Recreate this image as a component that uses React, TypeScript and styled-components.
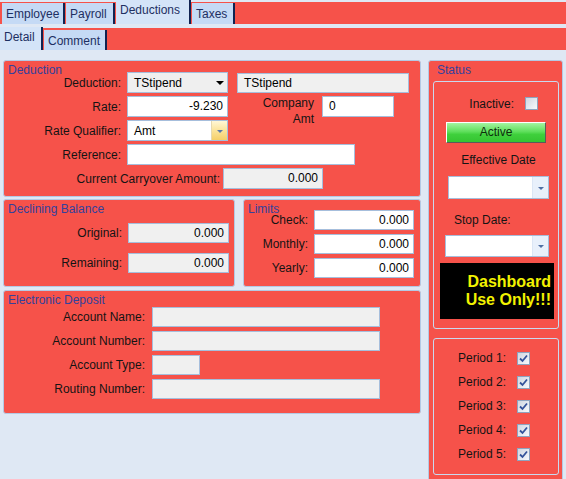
import React from 'react';
import styled, { createGlobalStyle } from 'styled-components';

const red = '#f6524a';
const pageBg = '#dfe8f4';
const frame = '#b4c9e4';
const fieldLine = '#a6bedc';
const captionBlue = '#34419c';

const GlobalStyle = createGlobalStyle`
    html, body {
        margin: 0;
        padding: 0;
        overflow: hidden;
        background: ${pageBg};
    }
    body {
        font-family: 'Liberation Sans', Arial, sans-serif;
        font-size: 12px;
        color: #141414;
    }
`;

const Page = styled.div`
    width: 566px;
    height: 479px;
    overflow: hidden;
    background: ${pageBg};
`;

const TabStrip = styled.div<{ $top: number; $indent: number }>`
    display: flex;
    align-items: flex-end;
    gap: 1px;
    height: 22px;
    margin-top: ${({ $top }) => $top}px;
    padding-left: ${({ $indent }) => $indent}px;
    background: ${red};
`;

const Tab = styled.div<{ $width: number; $height: number; $active?: boolean }>`
    box-sizing: border-box;
    flex-shrink: 0;
    width: ${({ $width }) => $width}px;
    height: ${({ $height }) => $height}px;
    padding: ${({ $active }) => ($active ? '3px 0 0 4px' : '4px 0 0 4px')};
    background: ${({ $active }) => ($active ? '#d4e4f8' : '#c5daf5')};
    border-right: 2px solid #102352;
    color: #1d2f62;
    font-size: 12px;
    line-height: 14px;
    white-space: nowrap;
`;

const Body = styled.div`
    display: flex;
    align-items: flex-start;
    gap: 7px;
    padding: 10px 0 0 3px;
`;

const LeftColumn = styled.div`
    display: flex;
    flex-direction: column;
    width: 418px;
`;

const GroupRow = styled.div`
    display: flex;
    gap: 8px;
    margin-top: 2px;
`;

const Group = styled.section<{ $width?: number; $height: number; $top?: number }>`
    box-sizing: border-box;
    flex-shrink: 0;
    width: ${({ $width }) => ($width ? `${$width}px` : '100%')};
    height: ${({ $height }) => $height}px;
    margin-top: ${({ $top }) => $top ?? 0}px;
    background: ${red};
    border: 1px solid ${frame};
    border-radius: 3px;
`;

const Caption = styled.div<{ $height: number }>`
    height: ${({ $height }) => $height}px;
    padding-left: 4px;
    line-height: 18px;
    color: ${captionBlue};
    white-space: nowrap;
`;

const Fields = styled.div<{ $gap: number; $top?: number }>`
    display: flex;
    flex-direction: column;
    gap: ${({ $gap }) => $gap}px;
    margin-top: ${({ $top }) => $top ?? 0}px;
`;

const Row = styled.div<{ $height?: number }>`
    display: flex;
    align-items: center;
    height: ${({ $height }) => $height ?? 21}px;
`;

const Label = styled.label<{ $width: number; $gap?: number }>`
    flex-shrink: 0;
    width: ${({ $width }) => $width}px;
    margin-right: ${({ $gap }) => $gap ?? 6}px;
    text-align: right;
    white-space: nowrap;
`;

const WrappedLabel = styled.label`
    align-self: flex-start;
    flex-shrink: 0;
    width: 60px;
    margin: -1px 8px 0 26px;
    line-height: 16px;
    text-align: right;
`;

const Field = styled.div<{
    $width: number;
    $height?: number;
    $grey?: boolean;
    $right?: boolean;
    $left?: number;
}>`
    box-sizing: border-box;
    flex-shrink: 0;
    width: ${({ $width }) => $width}px;
    height: ${({ $height }) => $height ?? 21}px;
    margin-left: ${({ $left }) => $left ?? 0}px;
    padding: 0 ${({ $right }) => ($right ? '4px' : '6px')};
    border: 1px solid ${fieldLine};
    background: ${({ $grey }) => ($grey ? '#f0f0f0' : '#ffffff')};
    line-height: ${({ $height }) => ($height ?? 21) - 2}px;
    text-align: ${({ $right }) => ($right ? 'right' : 'left')};
    color: #000;
    white-space: nowrap;
    overflow: hidden;
`;

const Combo = styled.div<{ $width: number; $height?: number; $grey?: boolean; $left?: number }>`
    box-sizing: border-box;
    display: flex;
    flex-shrink: 0;
    width: ${({ $width }) => $width}px;
    height: ${({ $height }) => $height ?? 21}px;
    margin-left: ${({ $left }) => $left ?? 0}px;
    border: 1px solid ${fieldLine};
    background: ${({ $grey }) => ($grey ? '#efefef' : '#ffffff')};
    color: #000;
`;

const ComboText = styled.span`
    flex: 1;
    padding-left: 6px;
    align-self: center;
    white-space: nowrap;
`;

const DropButton = styled.span<{ $kind: 'plain' | 'gold' | 'pale' }>`
    display: flex;
    align-items: center;
    justify-content: center;
    width: 15px;
    background: ${({ $kind }) =>
        $kind === 'gold'
            ? 'linear-gradient(#fff7d6, #fbe39a 50%, #f6cf68)'
            : $kind === 'pale'
              ? '#e8f0fb'
              : 'transparent'};
    border-left: ${({ $kind }) =>
        $kind === 'gold' ? '1px solid #e6d9b0' : $kind === 'pale' ? '1px solid #dbe6f5' : 'none'};
`;

const Arrow = styled.span<{ $color: string; $size: number }>`
    width: 0;
    height: 0;
    border-left: ${({ $size }) => $size}px solid transparent;
    border-right: ${({ $size }) => $size}px solid transparent;
    border-top: ${({ $size }) => $size}px solid ${({ $color }) => $color};
    margin-top: 1px;
`;

const StatusBox = styled.section`
    box-sizing: border-box;
    flex-shrink: 0;
    width: 135px;
    height: 440px;
    padding: 0 3px 0 4px;
    background: ${red};
    border: 1px solid ${frame};
    border-radius: 3px;
`;

const Panel = styled.div<{ $height: number; $top?: number }>`
    box-sizing: border-box;
    display: flex;
    flex-direction: column;
    height: ${({ $height }) => $height}px;
    margin-top: ${({ $top }) => $top ?? 0}px;
    border: 1px solid #c9d9ee;
    border-radius: 3px;
`;

const CheckRow = styled.div<{ $top?: number; $height: number; $pad: number }>`
    display: flex;
    align-items: center;
    justify-content: flex-end;
    gap: 11px;
    height: ${({ $height }) => $height}px;
    margin-top: ${({ $top }) => $top ?? 0}px;
    padding-right: ${({ $pad }) => $pad}px;
`;

const CheckSquare = styled.span`
    box-sizing: border-box;
    display: flex;
    align-items: center;
    justify-content: center;
    width: 13px;
    height: 13px;
    border: 1px solid #8ea3bf;
    background: linear-gradient(135deg, #cfd6e1, #f7f9fc);
`;

const ActiveButton = styled.div`
    box-sizing: border-box;
    width: 100px;
    height: 21px;
    margin: 12px 0 0 12px;
    border: 1px solid;
    border-color: #ffffff #5a5a5a #5a5a5a #ffffff;
    background: linear-gradient(#a4f3a0, #5fdf5c 45%, #3fd03c 60%, #35c432);
    color: #0d2d0d;
    text-align: center;
    line-height: 19px;
`;

const PanelText = styled.div<{ $top: number; $left?: number; $center?: boolean }>`
    margin-top: ${({ $top }) => $top}px;
    padding-left: ${({ $left }) => $left ?? 0}px;
    line-height: 14px;
    text-align: ${({ $center }) => ($center ? 'center' : 'left')};
    white-space: nowrap;
`;

const Notice = styled.div`
    box-sizing: border-box;
    display: flex;
    flex-direction: column;
    justify-content: center;
    width: 114px;
    height: 56px;
    margin: 6px 0 0 6px;
    padding-right: 3px;
    background: #000;
    color: #f2f200;
    font-size: 16px;
    font-weight: bold;
    line-height: 18px;
    text-align: right;
`;

const Check = ({ checked }: { checked?: boolean }) => (
    <CheckSquare>
        {checked && (
            <svg width="9" height="9" viewBox="0 0 9 9">
                <path d="M1 4.5 L3.5 7 L8 1.5" fill="none" stroke="#34529a" strokeWidth="1.8" />
            </svg>
        )}
    </CheckSquare>
);

const periods = ['Period 1:', 'Period 2:', 'Period 3:', 'Period 4:', 'Period 5:'];

export default function App() {
    return (
        <Page>
            <GlobalStyle />
            <TabStrip $top={2} $indent={2}>
                <Tab $width={63} $height={21}>Employee</Tab>
                <Tab $width={49} $height={21}>Payroll</Tab>
                <Tab $width={75} $height={24} $active>
                    Deductions
                </Tab>
                <Tab $width={43} $height={21}>Taxes</Tab>
            </TabStrip>
            <TabStrip $top={4} $indent={0}>
                <Tab $width={43} $height={23} $active>
                    Detail
                </Tab>
                <Tab $width={63} $height={20}>Comment</Tab>
            </TabStrip>

            <Body>
                <LeftColumn>
                    <Group $height={137}>
                        <Caption $height={11}>Deduction</Caption>
                        <Fields $gap={3}>
                            <Row>
                                <Label $width={117}>Deduction:</Label>
                                <Combo $width={101} $grey>
                                    <ComboText>TStipend</ComboText>
                                    <DropButton $kind="plain">
                                        <Arrow $color="#000" $size={4} />
                                    </DropButton>
                                </Combo>
                                <Field $width={172} $height={20} $grey $left={9}>
                                    TStipend
                                </Field>
                            </Row>
                            <Row>
                                <Label $width={117}>Rate:</Label>
                                <Field $width={101} $right>
                                    -9.230
                                </Field>
                                <WrappedLabel>Company Amt</WrappedLabel>
                                <Field $width={72}>0</Field>
                            </Row>
                            <Row>
                                <Label $width={117}>Rate Qualifier:</Label>
                                <Combo $width={101}>
                                    <ComboText>Amt</ComboText>
                                    <DropButton $kind="gold">
                                        <Arrow $color="#5b7aab" $size={3.5} />
                                    </DropButton>
                                </Combo>
                            </Row>
                            <Row>
                                <Label $width={117}>Reference:</Label>
                                <Field $width={228} />
                            </Row>
                            <Row>
                                <Label $width={216} $gap={3}>
                                    Current Carryover Amount:
                                </Label>
                                <Field $width={100} $grey $right>
                                    0.000
                                </Field>
                            </Row>
                        </Fields>
                    </Group>

                    <GroupRow>
                        <Group $width={232} $height={88}>
                            <Caption $height={10}>Declining Balance</Caption>
                            <Fields $gap={10} $top={13}>
                                <Row $height={20}>
                                    <Label $width={118}>Original:</Label>
                                    <Field $width={101} $height={20} $grey $right>
                                        0.000
                                    </Field>
                                </Row>
                                <Row $height={20}>
                                    <Label $width={118}>Remaining:</Label>
                                    <Field $width={101} $height={20} $grey $right>
                                        0.000
                                    </Field>
                                </Row>
                            </Fields>
                        </Group>
                        <Group $width={178} $height={88}>
                            <Caption $height={10}>Limits</Caption>
                            <Fields $gap={4}>
                                {['Check:', 'Monthly:', 'Yearly:'].map((name) => (
                                    <Row key={name} $height={20}>
                                        <Label $width={64}>{name}</Label>
                                        <Field $width={100} $height={20} $right>
                                            0.000
                                        </Field>
                                    </Row>
                                ))}
                            </Fields>
                        </Group>
                    </GroupRow>

                    <Group $height={124} $top={3}>
                        <Caption $height={16}>Electronic Deposit</Caption>
                        <Fields $gap={4}>
                            <Row $height={20}>
                                <Label $width={141} $gap={7}>
                                    Account Name:
                                </Label>
                                <Field $width={228} $height={20} $grey />
                            </Row>
                            <Row $height={20}>
                                <Label $width={141} $gap={7}>
                                    Account Number:
                                </Label>
                                <Field $width={228} $height={20} $grey />
                            </Row>
                            <Row $height={20}>
                                <Label $width={141} $gap={7}>
                                    Account Type:
                                </Label>
                                <Field $width={48} $height={20} $grey />
                            </Row>
                            <Row $height={20}>
                                <Label $width={141} $gap={7}>
                                    Routing Number:
                                </Label>
                                <Field $width={228} $height={20} $grey />
                            </Row>
                        </Fields>
                    </Group>
                </LeftColumn>

                <StatusBox>
                    <Caption $height={20}>Status</Caption>
                    <Panel $height={248}>
                        <CheckRow $top={15} $height={13} $pad={20}>
                            <span>Inactive:</span>
                            <Check />
                        </CheckRow>
                        <ActiveButton>Active</ActiveButton>
                        <PanelText $top={10} $left={5} $center>
                            Effective Date
                        </PanelText>
                        <Combo $width={101} $height={23} $left={14} style={{ marginTop: 9 }}>
                            <ComboText />
                            <DropButton $kind="pale">
                                <Arrow $color="#4e6fa4" $size={3.5} />
                            </DropButton>
                        </Combo>
                        <PanelText $top={14} $left={20}>
                            Stop Date:
                        </PanelText>
                        <Combo $width={104} $height={22} $left={11} style={{ marginTop: 8 }}>
                            <ComboText />
                            <DropButton $kind="pale">
                                <Arrow $color="#4e6fa4" $size={3.5} />
                            </DropButton>
                        </Combo>
                        <Notice>
                            <span>Dashboard</span>
                            <span>Use Only!!!</span>
                        </Notice>
                    </Panel>
                    <Panel $height={137} $top={9} style={{ paddingTop: 7 }}>
                        {periods.map((p) => (
                            <CheckRow key={p} $height={24} $pad={28}>
                                <span>{p}</span>
                                <Check checked />
                            </CheckRow>
                        ))}
                    </Panel>
                </StatusBox>
            </Body>
        </Page>
    );
}
